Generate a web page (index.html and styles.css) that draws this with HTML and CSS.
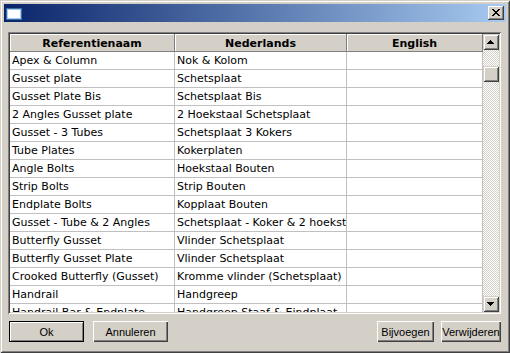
FILE: index.html
```html
<!DOCTYPE html>
<html lang="nl">
<head>
    <meta charset="UTF-8">
    <title>Referenties</title>
    <link rel="stylesheet" href="styles.css">
</head>
<body>
    <div class="window">
        <div class="titlebar">
            <svg class="app-icon" width="16" height="12" viewBox="0 0 16 12">
                <rect x="0" y="0" width="16" height="12" fill="#3a6ea5"/>
                <rect x="1" y="1" width="14" height="10" fill="#a6caf0"/>
                <rect x="2" y="2" width="12" height="8" fill="#ffffff"/>
            </svg>
            <div class="close-btn">
                <svg width="8" height="7" viewBox="0 0 8 7">
                    <path d="M0 0h2v1h-2zM6 0h2v1h-2zM1 1h2v1h-2zM5 1h2v1h-2zM2 2h4v1h-4zM3 3h2v1h-2zM2 4h4v1h-4zM1 5h2v1h-2zM5 5h2v1h-2zM0 6h2v1h-2zM6 6h2v1h-2z" fill="#000"/>
                </svg>
            </div>
        </div>

        <div class="content">
            <div class="grid">
                <div class="grid-view">
                    <table class="grid-table">
                        <colgroup>
                            <col class="col-ref">
                            <col class="col-nl">
                            <col class="col-en">
                        </colgroup>
                        <thead>
                            <tr><th>Referentienaam</th><th>Nederlands</th><th>English</th></tr>
                        </thead>
                        <tbody>
                            <tr><td>Apex &amp; Column</td><td>Nok &amp; Kolom</td><td></td></tr>
                            <tr><td>Gusset plate</td><td>Schetsplaat</td><td></td></tr>
                            <tr><td>Gusset Plate Bis</td><td>Schetsplaat Bis</td><td></td></tr>
                            <tr><td>2 Angles Gusset plate</td><td>2 Hoekstaal Schetsplaat</td><td></td></tr>
                            <tr><td>Gusset - 3 Tubes</td><td>Schetsplaat 3 Kokers</td><td></td></tr>
                            <tr><td>Tube Plates</td><td>Kokerplaten</td><td></td></tr>
                            <tr><td>Angle Bolts</td><td>Hoekstaal Bouten</td><td></td></tr>
                            <tr><td>Strip Bolts</td><td>Strip Bouten</td><td></td></tr>
                            <tr><td>Endplate Bolts</td><td>Kopplaat Bouten</td><td></td></tr>
                            <tr><td>Gusset - Tube &amp; 2 Angles</td><td>Schetsplaat - Koker &amp; 2 hoekstaal</td><td></td></tr>
                            <tr><td>Butterfly Gusset</td><td>Vlinder Schetsplaat</td><td></td></tr>
                            <tr><td>Butterfly Gusset Plate</td><td>Vlinder Schetsplaat</td><td></td></tr>
                            <tr><td>Crooked Butterfly (Gusset)</td><td>Kromme vlinder (Schetsplaat)</td><td></td></tr>
                            <tr><td>Handrail</td><td>Handgreep</td><td></td></tr>
                            <tr><td>Handrail Bar &amp; Endplate</td><td>Handgreep Staaf &amp; Eindplaat</td><td></td></tr>
                        </tbody>
                    </table>
                </div>
                <div class="vscroll">
                    <div class="scroll-btn">
                        <svg width="7" height="4" viewBox="0 0 7 4"><path d="M3 0h1v1h-1zM2 1h3v1h-3zM1 2h5v1h-5zM0 3h7v1h-7z" fill="#000"/></svg>
                    </div>
                    <div class="track">
                        <div class="thumb"></div>
                    </div>
                    <div class="scroll-btn">
                        <svg width="7" height="4" viewBox="0 0 7 4"><path d="M0 0h7v1h-7zM1 1h5v1h-5zM2 2h3v1h-3zM3 3h1v1h-1z" fill="#000"/></svg>
                    </div>
                </div>
            </div>

            <div class="buttons">
                <div class="button-group left">
                    <button class="btn btn-default btn-wide">Ok</button>
                    <button class="btn btn-wide">Annuleren</button>
                </div>
                <div class="button-group right">
                    <button class="btn btn-add">Bijvoegen</button>
                    <button class="btn btn-remove">Verwijderen</button>
                </div>
            </div>
        </div>
    </div>
</body>
</html>
```

FILE: styles.css
```css
* {
    margin: 0;
    padding: 0;
    box-sizing: border-box;
}

body {
    font-family: 'DejaVu Sans', Verdana, sans-serif;
    font-size: 11px;
    color: #000;
    background: #d4d0c8;
}

/* Classic window frame */
.window {
    width: 510px;
    height: 353px;
    padding: 4px;
    background: #d4d0c8;
    box-shadow:
        inset 1px 1px #d4d0c8,
        inset -1px -1px #404040,
        inset 2px 2px #ffffff,
        inset -2px -2px #808080;
    display: flex;
    flex-direction: column;
}

.titlebar {
    height: 18px;
    background: linear-gradient(to right, #0a246a 0%, #a6caf0 100%);
    display: flex;
    align-items: center;
    justify-content: space-between;
    padding: 0 2px;
}

.app-icon {
    display: block;
    margin-top: 2px;
}

.close-btn {
    width: 16px;
    height: 14px;
    background: #d4d0c8;
    box-shadow:
        inset -1px -1px #404040,
        inset 1px 1px #ffffff,
        inset -2px -2px #808080;
    display: flex;
    align-items: center;
    justify-content: center;
    padding: 0 1px 1px 0;
}

.close-btn svg {
    display: block;
}

.content {
    flex: 1;
    padding: 10px 5px 0 4px;
    display: flex;
    flex-direction: column;
}

/* Grid */
.grid {
    height: 282px;
    padding: 2px;
    background: #fff;
    display: flex;
    box-shadow:
        inset 1px 1px #808080,
        inset -1px -1px #ffffff,
        inset 2px 2px #404040,
        inset -2px -2px #d4d0c8;
}

.grid-view {
    flex: 1;
    overflow: hidden;
    background: #fff;
}

.grid-table {
    width: 473px;
    table-layout: fixed;
    border-collapse: separate;
    border-spacing: 0;
}

.col-ref { width: 165px; }
.col-nl { width: 172px; }
.col-en { width: 136px; }

.grid-table th,
.grid-table td {
    height: 18px;
    padding-top: 1px;
    line-height: 16px;
    white-space: nowrap;
    overflow: hidden;
    text-overflow: clip;
    font-size: 11px;
}

.grid-table th {
    background: #d4d0c8;
    font-weight: bold;
    text-align: center;
    padding-top: 2px;
    line-height: 15px;
    border-right: 1px solid #808080;
    border-bottom: 1px solid #808080;
    box-shadow: inset 1px 1px #ffffff;
}

.grid-table td {
    text-align: left;
    padding-left: 2px;
    padding-right: 2px;
    border-right: 1px solid #c0c0c0;
    border-bottom: 1px solid #c0c0c0;
}

/* Scrollbar */
.vscroll {
    width: 16px;
    display: flex;
    flex-direction: column;
}

.scroll-btn,
.thumb {
    height: 16px;
    background: #d4d0c8;
    box-shadow:
        inset 1px 1px #d4d0c8,
        inset -1px -1px #404040,
        inset 2px 2px #ffffff,
        inset -2px -2px #808080;
}

.scroll-btn {
    display: flex;
    align-items: center;
    justify-content: center;
    padding: 0 1px 1px 0;
}

.scroll-btn svg {
    display: block;
}

.track {
    flex: 1;
    padding-top: 16px;
    background: repeating-conic-gradient(#d4d0c8 0 25%, #ffffff 0 50%) 0 0 / 2px 2px;
}

/* Buttons */
.buttons {
    margin-top: 7px;
    display: flex;
    justify-content: space-between;
}

.button-group {
    display: flex;
}

.button-group.left {
    gap: 9px;
    padding-left: 1px;
}

.button-group.right {
    gap: 7px;
}

.btn {
    height: 21px;
    font-family: 'Liberation Sans', Arial, sans-serif;
    font-size: 11px;
    color: #000;
    background: #d4d0c8;
    border: none;
    box-shadow:
        inset 1px 1px #ffffff,
        inset -1px -1px #404040,
        inset -2px -2px #808080;
}

.btn-default {
    border: 1px solid #000;
    box-shadow:
        inset 1px 1px #ffffff,
        inset -1px -1px #808080;
}

.btn-wide { width: 75px; }
.btn-add { width: 57px; }
.btn-remove { width: 60px; }
```
